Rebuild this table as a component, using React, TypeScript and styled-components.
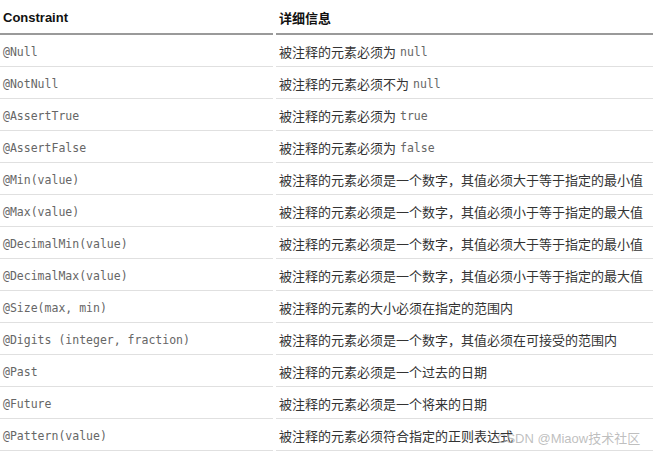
import React from 'react';
import styled, { createGlobalStyle } from 'styled-components';

const GlobalStyle = createGlobalStyle`
  html, body {
    margin: 0;
    padding: 0;
    background: #fff;
  }
  body {
    font-family: "Liberation Sans", "Noto Sans CJK SC", sans-serif;
  }
`;

const Page = styled.div`
  position: relative;
  width: 654px;
  height: 454px;
  overflow: hidden;
  background: #fff;
`;

const Table = styled.div`
  display: grid;
  grid-template-columns: 273px 377px;
  column-gap: 3px;
`;

const HeadCell = styled.div<{ $cjk?: boolean }>`
  box-sizing: border-box;
  height: 35px;
  padding: 1px 3px 0;
  display: flex;
  align-items: center;
  border-bottom: 2px solid #9a9a9a;
  font-family: ${(p) =>
    p.$cjk ? '"Noto Sans CJK SC", sans-serif' : '"Liberation Sans", Arial, sans-serif'};
  font-size: 13px;
  font-weight: bold;
  color: #111;
`;

const Cell = styled.div<{ $mono?: boolean }>`
  box-sizing: border-box;
  height: 32px;
  padding: 2px 3px 0;
  display: flex;
  align-items: center;
  border-bottom: 1px solid #e0e0e0;
  white-space: nowrap;
  font-family: ${(p) =>
    p.$mono ? '"DejaVu Sans Mono", monospace' : '"Noto Sans CJK SC", sans-serif'};
  font-size: ${(p) => (p.$mono ? '11.5px' : '13px')};
  color: ${(p) => (p.$mono ? '#666' : '#333')};
`;

const Code = styled.span`
  font-family: "DejaVu Sans Mono", monospace;
  font-size: 11.5px;
  color: #666;
  margin-left: 4px;
`;

const Watermark = styled.div`
  position: absolute;
  left: 497px;
  top: 428px;
  font-family: "Liberation Sans", "Noto Sans CJK SC", sans-serif;
  font-size: 13px;
  color: rgba(170, 170, 170, 0.75);
  white-space: nowrap;
  pointer-events: none;
`;

type Row = { name: string; desc: string; code?: string };

const rows: Row[] = [
  { name: '@Null', desc: '被注释的元素必须为', code: 'null' },
  { name: '@NotNull', desc: '被注释的元素必须不为', code: 'null' },
  { name: '@AssertTrue', desc: '被注释的元素必须为', code: 'true' },
  { name: '@AssertFalse', desc: '被注释的元素必须为', code: 'false' },
  { name: '@Min(value)', desc: '被注释的元素必须是一个数字，其值必须大于等于指定的最小值' },
  { name: '@Max(value)', desc: '被注释的元素必须是一个数字，其值必须小于等于指定的最大值' },
  { name: '@DecimalMin(value)', desc: '被注释的元素必须是一个数字，其值必须大于等于指定的最小值' },
  { name: '@DecimalMax(value)', desc: '被注释的元素必须是一个数字，其值必须小于等于指定的最大值' },
  { name: '@Size(max, min)', desc: '被注释的元素的大小必须在指定的范围内' },
  { name: '@Digits (integer, fraction)', desc: '被注释的元素必须是一个数字，其值必须在可接受的范围内' },
  { name: '@Past', desc: '被注释的元素必须是一个过去的日期' },
  { name: '@Future', desc: '被注释的元素必须是一个将来的日期' },
  { name: '@Pattern(value)', desc: '被注释的元素必须符合指定的正则表达式' },
];

export default function App() {
  return (
    <Page>
      <GlobalStyle />
      <Table>
        <HeadCell>Constraint</HeadCell>
        <HeadCell $cjk>详细信息</HeadCell>
        {rows.map((r) => (
          <React.Fragment key={r.name}>
            <Cell $mono>{r.name}</Cell>
            <Cell>
              {r.desc}
              {r.code && <Code>{r.code}</Code>}
            </Cell>
          </React.Fragment>
        ))}
      </Table>
      <Watermark>CSDN @Miaow技术社区</Watermark>
    </Page>
  );
}
